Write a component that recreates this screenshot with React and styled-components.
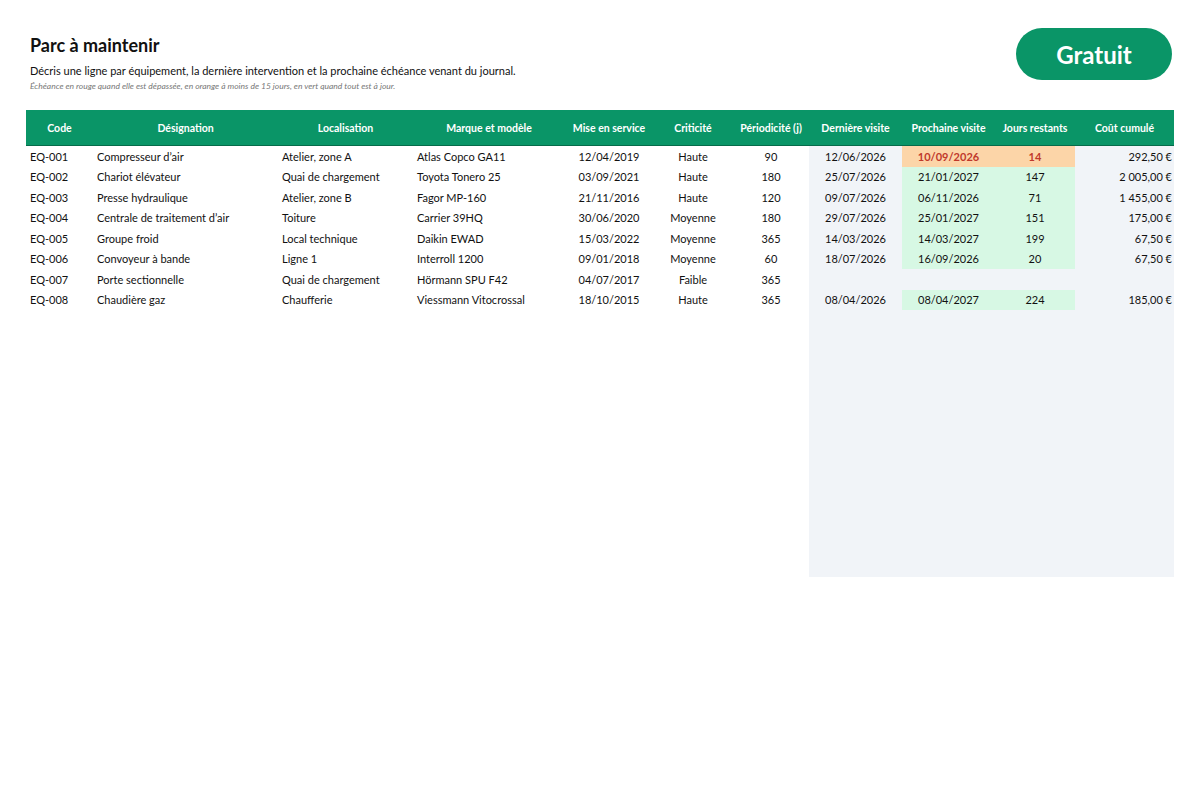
import React from "react";
import styled, { createGlobalStyle } from "styled-components";

const Global = createGlobalStyle`
  body { margin: 0; background: #fff; font-family: Lato, "Noto Sans", sans-serif; color: #111; }
`;
const cols = "67px 185px 135px 152px 88px 80px 76px 93px 93px 80px 99px";
const Page = styled.div`padding: 28px 26px 0 26px; width: 1148px;`;
const Top = styled.div`display: flex; justify-content: space-between; align-items: flex-start; height: 82px;`;
const Titles = styled.div`padding-left: 4px; padding-top: 6px;`;
const H1 = styled.h1`margin: 0; font-size: 18px; font-weight: 700; color: #111;`;
const Sub = styled.p`margin: 8px 0 0; font-size: 11px;`;
const Note = styled.p`margin: 4px 0 0; font-size: 8.5px; font-style: italic; color: #777;`;
const Badge = styled.div`width: 156px; height: 52px; border-radius: 26px; background: #0a9567; color: #fff;
  font-size: 24px; font-weight: 700; display: flex; align-items: center; justify-content: center; margin-right: 2px;`;
const Head = styled.div`display: grid; grid-template-columns: ${cols}; height: 35px; background: #0a9567; border-bottom: 1px solid #066b4a;
  color: #fff; font-size: 10.5px; font-weight: 700; align-items: center; text-align: center;`;
const Row = styled.div`display: grid; grid-template-columns: ${cols}; height: 20.5px; font-size: 11px; align-items: stretch;`;
const Cell = styled.div`display: flex; align-items: center; padding: 0 4px;
  justify-content: ${p => p.$a === "l" ? "flex-start" : p.$a === "r" ? "flex-end" : "center"};
  background: ${p => p.$bg || "transparent"}; color: ${p => p.$c || "#111"}; font-weight: ${p => p.$b ? 700 : 400};
  padding-right: ${p => p.$a === "r" ? "2px" : "4px"};`;

const data = [
  ["EQ-001","Compresseur d’air","Atelier, zone A","Atlas Copco GA11","12/04/2019","Haute","90","12/06/2026","10/09/2026","14","292,50 €","o"],
  ["EQ-002","Chariot élévateur","Quai de chargement","Toyota Tonero 25","03/09/2021","Haute","180","25/07/2026","21/01/2027","147","2 005,00 €","g"],
  ["EQ-003","Presse hydraulique","Atelier, zone B","Fagor MP-160","21/11/2016","Haute","120","09/07/2026","06/11/2026","71","1 455,00 €","g"],
  ["EQ-004","Centrale de traitement d’air","Toiture","Carrier 39HQ","30/06/2020","Moyenne","180","29/07/2026","25/01/2027","151","175,00 €","g"],
  ["EQ-005","Groupe froid","Local technique","Daikin EWAD","15/03/2022","Moyenne","365","14/03/2026","14/03/2027","199","67,50 €","g"],
  ["EQ-006","Convoyeur à bande","Ligne 1","Interroll 1200","09/01/2018","Moyenne","60","18/07/2026","16/09/2026","20","67,50 €","g"],
  ["EQ-007","Porte sectionnelle","Quai de chargement","Hörmann SPU F42","04/07/2017","Faible","365","","","","",""],
  ["EQ-008","Chaudière gaz","Chaufferie","Viessmann Vitocrossal","18/10/2015","Haute","365","08/04/2026","08/04/2027","224","185,00 €","g"],
];
while (data.length < 21) data.push(["","","","","","","","","","","",""]);
const heads = ["Code","Désignation","Localisation","Marque et modèle","Mise en service","Criticité","Périodicité (j)","Dernière visite","Prochaine visite","Jours restants","Coût cumulé"];
const gray = "#f1f4f8";

export default function App() {
  return (
    <Page>
      <Global />
      <Top>
        <Titles>
          <H1>Parc à maintenir</H1>
          <Sub>Décris une ligne par équipement, la dernière intervention et la prochaine échéance venant du journal.</Sub>
          <Note>Échéance en rouge quand elle est dépassée, en orange à moins de 15 jours, en vert quand tout est à jour.</Note>
        </Titles>
        <Badge>Gratuit</Badge>
      </Top>
      <Head>{heads.map(h => <div key={h}>{h}</div>)}</Head>
      {data.map((r, i) => {
        const s = r[11];
        const hi = s === "o" ? "#fcd5a8" : s === "g" ? "#d7f8e4" : gray;
        const hc = s === "o" ? "#c0392b" : undefined;
        return (
          <Row key={i}>
            <Cell $a="l">{r[0]}</Cell>
            <Cell $a="l">{r[1]}</Cell>
            <Cell $a="l">{r[2]}</Cell>
            <Cell $a="l">{r[3]}</Cell>
            <Cell>{r[4]}</Cell>
            <Cell>{r[5]}</Cell>
            <Cell>{r[6]}</Cell>
            <Cell $bg={gray}>{r[7]}</Cell>
            <Cell $bg={hi} $c={hc} $b={s === "o"}>{r[8]}</Cell>
            <Cell $bg={hi} $c={hc} $b={s === "o"}>{r[9]}</Cell>
            <Cell $a="r" $bg={gray}>{r[10]}</Cell>
          </Row>
        );
      })}
    </Page>
  );
}
